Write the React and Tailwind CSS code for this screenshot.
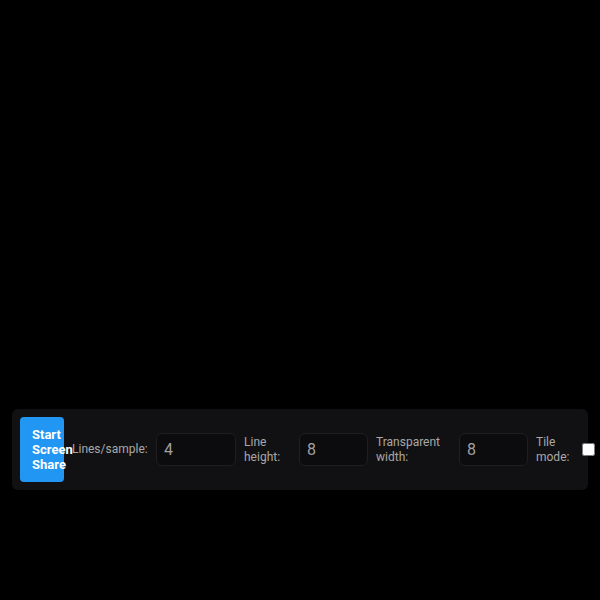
export default function App() {
  return (
    <div className="flex h-[600px] w-[600px] flex-col bg-black font-['Roboto',sans-serif]">
      <div className="h-[409px] shrink-0" />
      {/* Controls bar */}
      <div className="mx-[12px] flex items-center gap-2 rounded-md bg-[#111113] p-2">
        <button className="w-[44px] shrink-0 rounded bg-[#2196f3] px-3 py-[10px] text-left text-[13px] font-bold leading-[15px] text-white">
          Start Screen Share
        </button>
        <label className="w-[76px] shrink-0 whitespace-nowrap text-[12px] leading-[15px] text-[#a8a8a8]">
          Lines/sample:
        </label>
        <input
          type="number"
          defaultValue={4}
          className="h-[33px] w-[80px] shrink-0 rounded-md border border-[#1f1f22] bg-[#0c0c0e] px-[7px] text-base text-[#a0a0a0] outline-none"
        />
        <label className="w-[47px] shrink-0 text-[12px] leading-[15px] text-[#a8a8a8]">Line height:</label>
        <input
          type="number"
          defaultValue={8}
          className="h-[33px] w-[69px] shrink-0 rounded-md border border-[#1f1f22] bg-[#0c0c0e] px-[7px] text-base text-[#a0a0a0] outline-none"
        />
        <label className="w-[75px] shrink-0 text-[12px] leading-[15px] text-[#a8a8a8]">
          Transparent width:
        </label>
        <input
          type="number"
          defaultValue={8}
          className="h-[33px] w-[69px] shrink-0 rounded-md border border-[#1f1f22] bg-[#0c0c0e] px-[7px] text-base text-[#a0a0a0] outline-none"
        />
        <label className="w-[38px] shrink-0 text-[12px] leading-[15px] text-[#a8a8a8]">Tile mode:</label>
        <input type="checkbox" className="h-[13px] w-[13px] shrink-0" />
      </div>
    </div>
  );
}
